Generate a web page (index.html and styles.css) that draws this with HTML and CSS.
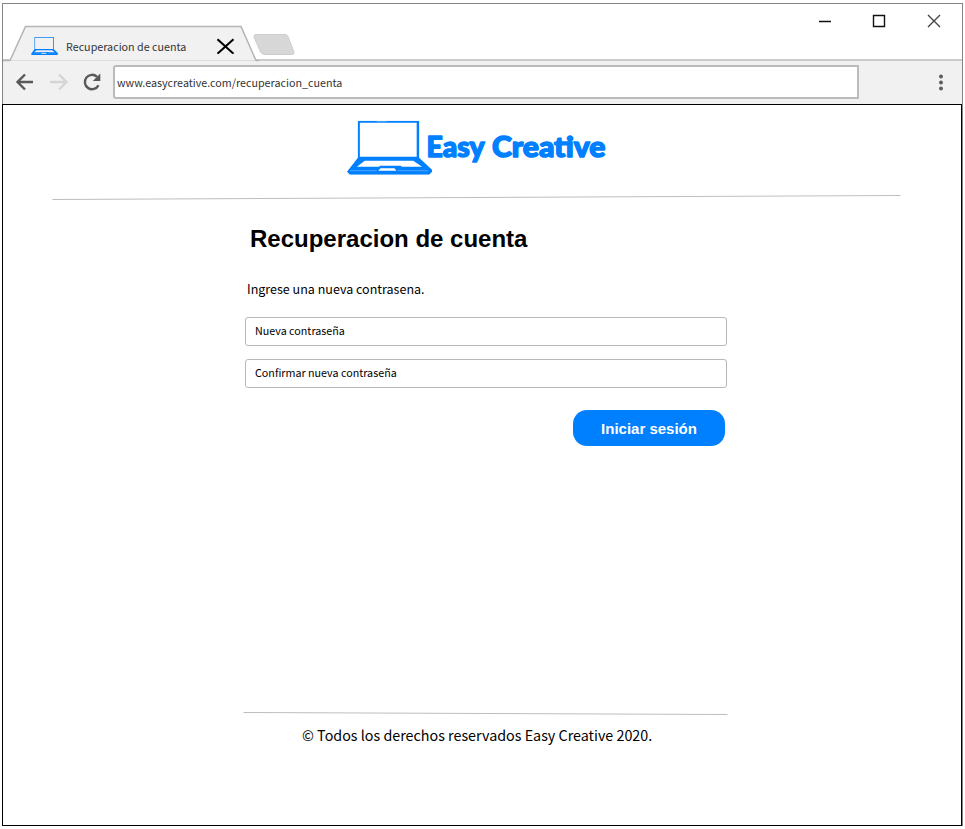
FILE: index.html
```html
<!DOCTYPE html>
<html lang="es">
<head>
<meta charset="utf-8">
<title>Recuperacion de cuenta</title>
<link rel="stylesheet" href="styles.css">
</head>
<body>
<svg class="defs" aria-hidden="true">
  <symbol id="laptop" viewBox="0 0 86 54" preserveAspectRatio="none">
    <path fill="#007fff" fill-rule="evenodd" d="M12 0H72Q73 0 73 1V37L86 49V51L83 54H3L0 51L11 37V1Q11 0 12 0ZM13 2V36H70.500V2ZM18 40L10 46H32L34 45H54L56 46H76L67 40ZM34 47.500L31.500 50H50L48 47.500Z"/>
    <path fill="none" stroke="#72b9ff" stroke-width=".7" d="M3 50H30M51 50H82M30 1H40"/>
  </symbol>
</svg>
<div class="window">
  <header class="titlebar">
    <div class="tab">
      <svg class="tab-shape" width="256" height="40" viewBox="0 0 256 40"><path fill="#f1f1f1" stroke="#b4b4b4" stroke-width="1.5" d="M0 37.5H7L22.5 3.500H238L253 37.5H256"/><path fill="#f1f1f1" d="M7.500 38.3H252.500V40H7.500Z"/></svg>
      <svg class="favicon" width="27" height="18"><use href="#laptop"/></svg>
      <span class="tab-title">Recuperacion de cuenta</span>
      <svg class="tab-close" width="18" height="16" viewBox="0 0 18 16"><path stroke="#000" stroke-width="2" d="M.5 1.300L16.500 15.700M16.500 1.300L.5 15.700"/></svg>
    </div>
    <svg class="new-tab" width="42" height="21" viewBox="0 0 42 21"><path fill="#d7d7d7" stroke="#cdcdcd" d="M3 .5H32Q34 .5 35 2.5L41 18Q41.500 20.500 39 20.500H12Q9 20.500 7.500 18L1 3Q.5 .5 3 .5Z"/></svg>
    <svg class="controls" width="124" height="16" viewBox="0 0 124 16"><path fill="none" stroke="#111" stroke-width="1.4" d="M1 8.500H13M55.500 2.500H66.500V13.500H55.500Z"/><path stroke="#444" stroke-width="1.4" d="M110 2L122 14M122 2L110 14"/></svg>
  </header>
  <nav class="toolbar">
    <svg class="nav-icons" width="88" height="24" viewBox="0 0 88 24" fill="none" stroke-width="2.400"><path stroke="#595959" d="M18 12H3M10 4.500L2.500 12L10 19.500"/><path stroke="#d5d5d5" d="M35 12H51M44 4.500L51.500 12L44 19.500"/><path stroke="#595959" d="M83.500 15.200A7.200 7.200 0 1 1 82 6.800"/><path fill="#595959" d="M85.300 3.500V11H77.800Z"/></svg>
    <div class="address">www.easycreative.com/recuperacion_cuenta</div>
    <svg class="menu" width="6" height="18" viewBox="0 0 6 18" fill="#5e5e5e"><circle cx="3" cy="3.500" r="2"/><circle cx="3" cy="9.500" r="2"/><circle cx="3" cy="15.500" r="2"/></svg>
  </nav>
  <main class="page">
    <svg class="logo" width="262" height="60" viewBox="0 0 262 60" role="img" aria-label="Easy Creative">
      <use href="#laptop" x="1" y="0.7" width="85" height="54"/>
      <text class="brand" y="37"><tspan x="80.5" textLength="58" lengthAdjust="spacingAndGlyphs">Easy</tspan><tspan x="146" textLength="113.500" lengthAdjust="spacingAndGlyphs">Creative</tspan></text>
    </svg>
    <svg class="rule-top" width="849" height="6"><path stroke="#bdbdbd" d="M.5 4.500L848.500 .5"/></svg>
    <form class="recovery">
      <h1>Recuperacion de cuenta</h1>
      <p>Ingrese una nueva contrasena.</p>
      <div class="field">Nueva contraseña</div>
      <div class="field">Confirmar nueva contraseña</div>
      <button type="button">Iniciar sesión</button>
    </form>
    <footer>
      <svg class="rule-bottom" width="485" height="4"><path stroke="#bdbdbd" d="M.5 .5L484.500 2.500"/></svg>
      <div class="copyright">© Todos los derechos reservados Easy Creative 2020.</div>
    </footer>
  </main>
</div>
</body>
</html>
```

FILE: styles.css
```css
* { box-sizing: border-box; }
body { margin: 0; background: #fff; color: #000; font-family: "Noto Sans CJK JP", "Noto Sans", sans-serif; }
svg { display: block; flex: none; }
.defs { position: absolute; width: 0; height: 0; }
.window { width: 961px; height: 823px; margin: 3px 0 0 2px; border: 1px solid #858585; border-bottom: 0; display: flex; flex-direction: column; }
.titlebar { height: 57px; flex: none; display: flex; border-bottom: 2px solid #cbcbcb; position: relative; }
.tab { width: 250px; height: 38px; margin-top: 19px; display: flex; align-items: center; position: relative; padding: 7px 0 0 28px; }
.tab-shape { position: absolute; left: 0; top: 0; z-index: 0; }
.favicon, .tab-title, .tab-close { position: relative; }
.tab-title { width: 121px; margin-left: 8px; font-size: 10.74px; line-height: 16px; padding-top: 2px; color: #333; white-space: nowrap; }
.tab-close { margin-left: 30px; }
.new-tab { margin: 30px 0 0 0; }
.controls { margin: 9px 20px 0 auto; }
.toolbar { height: 43px; flex: none; display: flex; align-items: center; background: #f1f1f1; padding: 0 18px 2px 12px; }
.address { width: 746px; height: 34px; margin: 0 auto 0 10px; padding-left: 2px; background: #fff; border: 2px solid #bbb; border-radius: 3px 0 0 3px; font-size: 10.74px; line-height: 32px; color: #333; }
.page { width: 960px; height: 722px; flex: none; margin-left: -1px; border: 1px solid #000; display: flex; flex-direction: column; }
.logo { margin: 15px 0 0 343px; overflow: visible; }
.brand { font: 900 29px Lato, sans-serif; fill: #007fff; stroke: #007fff; stroke-width: 1.5px; stroke-linejoin: round; }
.rule-top { margin: 15px 0 0 49px; }
.recovery { width: 482px; margin: 22px 0 0 242px; display: flex; flex-direction: column; }
h1 { margin: 0 0 0 5px; font: bold 24px/32px "Liberation Sans", sans-serif; }
p { margin: 24px 0 18px 2px; font-size: 12.53px; line-height: 20px; }
.field { height: 29px; margin-bottom: 13px; padding-left: 9px; border: 1px solid #b8b8b8; border-radius: 3px; font-size: 10.74px; line-height: 25px; }
button { width: 152px; height: 36px; margin: 9px 2px 0 auto; padding: 1px 0 0; border: 0; border-radius: 14px; background: #007fff; color: #fff; font: bold 15px "Liberation Sans", sans-serif; }
footer { margin: auto 0 78px 240px; width: 485px; }
.copyright { margin: 7px 0 0 59px; font-size: 14.32px; line-height: 24px; white-space: nowrap; }
```
